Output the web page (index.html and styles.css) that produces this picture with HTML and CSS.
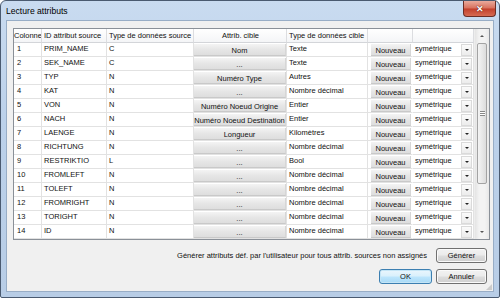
FILE: index.html
```html
<!DOCTYPE html>
<html lang="fr">
<head>
    <meta charset="UTF-8">
    <title>Lecture attributs</title>
    <link rel="stylesheet" href="styles.css">
</head>
<body>
    <div class="window">
        <div class="titlebar">
            <span class="title">Lecture attributs</span>
            <div class="close">&#x2715;</div>
        </div>
        <div class="client">
            <div class="grid">
                <table class="attrs">
                    <colgroup>
                        <col style="width:28px">
                        <col style="width:65px">
                        <col style="width:87px">
                        <col style="width:93px">
                        <col style="width:81px">
                        <col style="width:45px">
                        <col style="width:61px">
                    </colgroup>
                    <thead>
                        <tr>
                            <th class="first">Colonne</th>
                            <th>ID attribut source</th>
                            <th>Type de données source</th>
                            <th class="center">Attrib. cible</th>
                            <th>Type de données cible</th>
                            <th></th>
                            <th></th>
                        </tr>
                    </thead>
                    <tbody>
                        <tr><td>1</td><td>PRIM_NAME</td><td>C</td><td class="act"><div class="cbtn">Nom</div></td><td class="tc">Texte</td><td class="nv"><div class="cbtn">Nouveau</div></td><td class="combo"><span>symétrique</span><i class="drop"></i></td></tr>
                        <tr><td>2</td><td>SEK_NAME</td><td>C</td><td class="act"><div class="cbtn">...</div></td><td class="tc">Texte</td><td class="nv"><div class="cbtn">Nouveau</div></td><td class="combo"><span>symétrique</span><i class="drop"></i></td></tr>
                        <tr><td>3</td><td>TYP</td><td>N</td><td class="act"><div class="cbtn">Numéro Type</div></td><td class="tc">Autres</td><td class="nv"><div class="cbtn">Nouveau</div></td><td class="combo"><span>symétrique</span><i class="drop"></i></td></tr>
                        <tr><td>4</td><td>KAT</td><td>N</td><td class="act"><div class="cbtn">...</div></td><td class="tc">Nombre décimal</td><td class="nv"><div class="cbtn">Nouveau</div></td><td class="combo"><span>symétrique</span><i class="drop"></i></td></tr>
                        <tr><td>5</td><td>VON</td><td>N</td><td class="act"><div class="cbtn">Numéro Noeud Origine</div></td><td class="tc">Entier</td><td class="nv"><div class="cbtn">Nouveau</div></td><td class="combo"><span>symétrique</span><i class="drop"></i></td></tr>
                        <tr><td>6</td><td>NACH</td><td>N</td><td class="act"><div class="cbtn">Numéro Noeud Destination</div></td><td class="tc">Entier</td><td class="nv"><div class="cbtn">Nouveau</div></td><td class="combo"><span>symétrique</span><i class="drop"></i></td></tr>
                        <tr><td>7</td><td>LAENGE</td><td>N</td><td class="act"><div class="cbtn">Longueur</div></td><td class="tc">Kilomètres</td><td class="nv"><div class="cbtn">Nouveau</div></td><td class="combo"><span>symétrique</span><i class="drop"></i></td></tr>
                        <tr><td>8</td><td>RICHTUNG</td><td>N</td><td class="act"><div class="cbtn">...</div></td><td class="tc">Nombre décimal</td><td class="nv"><div class="cbtn">Nouveau</div></td><td class="combo"><span>symétrique</span><i class="drop"></i></td></tr>
                        <tr><td>9</td><td>RESTRIKTIO</td><td>L</td><td class="act"><div class="cbtn">...</div></td><td class="tc">Bool</td><td class="nv"><div class="cbtn">Nouveau</div></td><td class="combo"><span>symétrique</span><i class="drop"></i></td></tr>
                        <tr><td>10</td><td>FROMLEFT</td><td>N</td><td class="act"><div class="cbtn">...</div></td><td class="tc">Nombre décimal</td><td class="nv"><div class="cbtn">Nouveau</div></td><td class="combo"><span>symétrique</span><i class="drop"></i></td></tr>
                        <tr><td>11</td><td>TOLEFT</td><td>N</td><td class="act"><div class="cbtn">...</div></td><td class="tc">Nombre décimal</td><td class="nv"><div class="cbtn">Nouveau</div></td><td class="combo"><span>symétrique</span><i class="drop"></i></td></tr>
                        <tr><td>12</td><td>FROMRIGHT</td><td>N</td><td class="act"><div class="cbtn">...</div></td><td class="tc">Nombre décimal</td><td class="nv"><div class="cbtn">Nouveau</div></td><td class="combo"><span>symétrique</span><i class="drop"></i></td></tr>
                        <tr><td>13</td><td>TORIGHT</td><td>N</td><td class="act"><div class="cbtn">...</div></td><td class="tc">Nombre décimal</td><td class="nv"><div class="cbtn">Nouveau</div></td><td class="combo"><span>symétrique</span><i class="drop"></i></td></tr>
                        <tr><td>14</td><td>ID</td><td>N</td><td class="act"><div class="cbtn">...</div></td><td class="tc">Nombre décimal</td><td class="nv"><div class="cbtn">Nouveau</div></td><td class="combo"><span>symétrique</span><i class="drop"></i></td></tr>
                        <tr class="partial"><td></td><td></td><td></td><td class="act"><div class="cbtn"></div></td><td class="tc"></td><td class="nv"><div class="cbtn"></div></td><td class="combo"><span></span><i class="drop"></i></td></tr>
                    </tbody>
                </table>
                <div class="vscroll">
                    <div class="arrow up"></div>
                    <div class="track">
                        <div class="thumb"><span class="grip"></span></div>
                    </div>
                    <div class="arrow down"></div>
                </div>
            </div>

            <div class="gen-row">
                <span>Générer attributs déf. par l'utilisateur pour tous attrib. sources non assignés</span>
                <button class="btn gen">Générer</button>
            </div>
            <div class="btn-row">
                <button class="btn ok">OK</button>
                <button class="btn">Annuler</button>
            </div>
            <div class="sizegrip"></div>
        </div>
    </div>
</body>
</html>
```

FILE: styles.css
```css
* {
    box-sizing: border-box;
}
body {
    margin: 0;
    font-family: "Liberation Sans", Arial, sans-serif;
    font-size: 7.5px;
    color: #111;
    background: #fff;
}
.window {
    width: 500px;
    height: 298px;
    border: 1px solid #4a5a70;
    border-radius: 6px 6px 2px 2px;
    background: linear-gradient(#c9dbf0, #bcd1ea 40%, #b8cde6);
    display: flex;
    flex-direction: column;
}
.titlebar {
    height: 19px;
    display: flex;
    justify-content: space-between;
    align-items: flex-start;
    padding-left: 5px;
}
.title {
    font-size: 8.6px;
    margin-top: 5px;
    color: #000;
}
.close {
    width: 33px;
    height: 16px;
    margin-right: 3px;
    border: 1px solid #6b2d25;
    border-top: none;
    border-radius: 0 0 4px 4px;
    background: linear-gradient(#e9aa9c, #d8705d 48%, #c23f2b 52%, #d66a52);
    color: #fff;
    font-size: 9px;
    font-weight: bold;
    display: flex;
    align-items: center;
    justify-content: center;
    text-shadow: 0 0 1px #5a1a10, 0 0 1px #5a1a10;
}
.client {
    flex: 1;
    margin: 0 5px 5px 5px;
    border: 1px solid #98adc6;
    background: #f0f0f0;
    padding: 7px 3px 0 6px;
    display: flex;
    flex-direction: column;
    position: relative;
}

/* grid */
.grid {
    width: 477px;
    height: 212px;
    border: 1px solid #8a9098;
    background: #fff;
    display: flex;
    overflow: hidden;
}
.attrs {
    width: 460px;
    table-layout: fixed;
    border-collapse: separate;
    border-spacing: 0;
    flex: none;
    align-self: flex-start;
}
.attrs th, .attrs td {
    height: 14px;
    padding: 0 2px;
    border-right: 1px solid #e2e2e2;
    border-bottom: 1px solid #e2e2e2;
    white-space: nowrap;
    overflow: hidden;
    text-align: left;
    font-weight: normal;
    line-height: 12px;
    vertical-align: top;
    color: #111;
}
.attrs th {
    background: linear-gradient(#ffffff, #f4f5f7);
    border-right-color: #dcdde0;
    border-bottom-color: #d3d5d9;
    line-height: 13px;
    padding: 0 1px 0 2px;
}
.attrs th.first {
    padding: 0;
    text-overflow: clip;
}
.attrs th.center {
    text-align: center;
}
.attrs td:first-child {
    padding-left: 3px;
}
.attrs td.tc {
    line-height: 11px;
}
.attrs td.act {
    padding: 1px 0 0 0;
}
.attrs td.nv {
    padding: 1px 1px 0 3px;
    border-right-color: #fff;
}
.cbtn {
    height: 12px;
    line-height: 13px;
    text-align: center;
    color: #111;
    background: linear-gradient(#f4f4f4, #e6e6e6 50%, #dedede);
    border-bottom: 1px solid #c9c9c9;
    border-right: 1px solid #d6d6d6;
    overflow: hidden;
    white-space: nowrap;
}
.nv .cbtn {
    line-height: 14px;
}
.attrs td.combo {
    display: flex;
    justify-content: space-between;
    padding: 0 1px 0 2px;
    line-height: 11px;
}
.drop {
    width: 11px;
    height: 12px;
    margin-top: 1px;
    border: 1px solid #dadada;
    background: linear-gradient(#fbfbfb, #ececec);
    display: flex;
    align-items: center;
    justify-content: center;
}
.drop::after {
    content: "";
    border-left: 2px solid transparent;
    border-right: 2px solid transparent;
    border-top: 2px solid #222;
}

/* scrollbar */
.vscroll {
    width: 15px;
    display: flex;
    flex-direction: column;
    background: linear-gradient(90deg, #e4e4e4, #f3f3f3 30%, #f3f3f3 70%, #e8e8e8);
    border-left: 1px solid #ededed;
}
.arrow {
    height: 14px;
    display: flex;
    align-items: center;
    justify-content: center;
}
.arrow::after {
    content: "";
    border-left: 2px solid transparent;
    border-right: 2px solid transparent;
}
.arrow.up::after {
    border-bottom: 2px solid #555;
}
.arrow.down::after {
    border-top: 2px solid #555;
}
.track {
    flex: 1;
    padding: 0 2px;
}
.thumb {
    height: 141px;
    border: 1px solid #a3a3a3;
    border-radius: 2px;
    background: linear-gradient(90deg, #f4f4f4, #e8e8e8 50%, #dcdcdc);
    display: flex;
    align-items: center;
    justify-content: center;
}
.grip {
    width: 5px;
    height: 5px;
    border-top: 1px solid #888;
    border-bottom: 1px solid #888;
    background: linear-gradient(#fff 40%, #888 40%, #888 60%, #fff 60%);
}

/* bottom */
.gen-row {
    margin-top: 8px;
    padding-right: 3px;
    display: flex;
    justify-content: flex-end;
    align-items: center;
    gap: 9px;
}
.btn-row {
    margin-top: 6px;
    padding-right: 3px;
    display: flex;
    justify-content: flex-end;
    gap: 4px;
}
.btn {
    width: 51px;
    height: 15px;
    padding: 0;
    font-family: inherit;
    font-size: 7.5px;
    color: #111;
    border: 1px solid #707070;
    border-radius: 3px;
    background: linear-gradient(#f2f2f2, #ebebeb 48%, #dddddd 52%, #cfcfcf);
    box-shadow: inset 0 0 0 1px #fafafa;
}
.btn.ok {
    width: 53px;
    border-color: #3c7fb1;
    background: linear-gradient(#eaf6fd, #d9f0fc 48%, #bee6fd 52%, #a7d9f5);
    box-shadow: inset 0 0 0 1px #c4e5f6;
}
.sizegrip {
    position: absolute;
    right: 1px;
    bottom: 1px;
    width: 6px;
    height: 6px;
    background:
        radial-gradient(circle, #a0a0a0 0.6px, transparent 0.8px) 0 0 / 2px 2px;
    clip-path: polygon(100% 0, 100% 100%, 0 100%);
}
```
